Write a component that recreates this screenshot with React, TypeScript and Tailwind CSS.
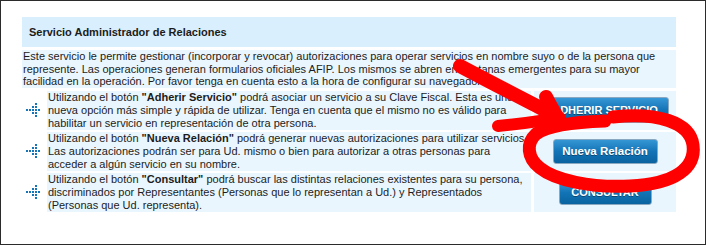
import React from "react";

function DotIcon() {
  const dots: [number, number][] = [
    [0, 6], [3, 6], [6, 3], [6, 6], [6, 9], [9, 0], [9, 3], [9, 6], [9, 9], [9, 12], [12, 6],
  ];
  return (
    <svg width="14" height="14" viewBox="0 0 14 14" className="block">
      {dots.map(([x, y], i) => (
        <rect key={i} x={x} y={y} width="2" height="2" fill="#1575bb" />
      ))}
    </svg>
  );
}

function BlueButton({ label, w, h, size }: { label: string; w: string; h: string; size: string }) {
  return (
    <div
      className={`${w} ${h} ${size} flex items-center justify-center rounded-[3px] border border-[#8aa9c1] bg-linear-to-b from-[#3597d6] via-[#1274b6] to-[#0a63a0] font-bold text-white [text-shadow:0_1px_0_rgba(0,0,0,0.35)] font-['Liberation_Sans',Arial,sans-serif]`}
    >
      {label}
    </div>
  );
}

function Row({ children, button }: { children: React.ReactNode; button: React.ReactNode }) {
  return (
    <div className="flex gap-[3px]">
      <div className="w-[22px] flex items-center justify-center">
        <DotIcon />
      </div>
      <div className="w-[484px] bg-[#eaf6fe] px-[1px] py-[0.5px]">{children}</div>
      <div className="w-[142px] bg-[#eaf6fe] flex items-center justify-center">{button}</div>
    </div>
  );
}

export default function App() {
  return (
    <div className="relative w-[706px] h-[245px] overflow-hidden border border-[#2b2b2b] bg-white text-[11px] leading-[1.15] text-[#1c1c1c] font-['Liberation_Sans',Arial,sans-serif]">
      <div className="pt-[16px] pl-[21px] w-[675px] flex flex-col">
        <div className="h-[30px] bg-[#d9effd] flex items-center pl-[7px] font-bold">
          Servicio Administrador de Relaciones
        </div>
        <div className="mt-[3px] bg-[#eaf6fe] px-[1px]">
          Este servicio le permite gestionar (incorporar y revocar) autorizaciones para operar servicios en nombre suyo o de la persona que
          represente. Las operaciones generan formularios oficiales AFIP. Los mismos se abren en ventanas emergentes para su mayor
          facilidad en la operación. Por favor tenga en cuenta esto a la hora de configurar su navegador.
        </div>
        <div className="mt-[3px] flex flex-col gap-[2px]">
          <Row button={<BlueButton label="ADHERIR SERVICIO" w="w-[128px]" h="h-[26px]" size="text-[11px]" />}>
            Utilizando el botón <b>"Adherir Servicio"</b> podrá asociar un servicio a su Clave Fiscal. Esta es una nueva opción más simple y rápida de utilizar. Tenga en cuenta que el mismo no es válido para habilitar un servicio en representación de otra persona.
          </Row>
          <Row button={<BlueButton label="Nueva Relación" w="w-[105px]" h="h-[25px]" size="text-[11.5px]" />}>
            Utilizando el botón <b>"Nueva Relación"</b> podrá generar nuevas autorizaciones para utilizar servicios. Las autorizaciones podrán ser para Ud. mismo o bien para autorizar a otras personas para acceder a algún servicio en su nombre.
          </Row>
          <Row button={<BlueButton label="CONSULTAR" w="w-[93px]" h="h-[25px]" size="text-[11px]" />}>
            Utilizando el botón <b>"Consultar"</b> podrá buscar las distintas relaciones existentes para su persona,<br />
            discriminados por Representantes (Personas que lo representan a Ud.) y Representados<br />
            (Personas que Ud. representa).
          </Row>
        </div>
      </div>
      <svg
        className="absolute left-[-1px] top-[-1px] pointer-events-none"
        width="706"
        height="245"
        viewBox="0 0 706 245"
      >
        <g fill="none" stroke="#ff0000" strokeLinecap="round" strokeLinejoin="round">
          <path d="M460 66 C490 82, 525 100, 556 116" strokeWidth="14" />
          <path d="M546 97 C550 105, 553 111, 558 118" strokeWidth="14" />
          <path d="M498 126 C530 123, 545 120, 560 118" strokeWidth="12" />
          <path
            d="M613 117 C657 112, 690 122, 693 145 C696 168, 675 184, 630 186 C590 188, 555 180, 540 168 C527 158, 526 143, 536 134 C548 125, 575 122, 605 121"
            strokeWidth="13"
          />
        </g>
      </svg>
    </div>
  );
}
